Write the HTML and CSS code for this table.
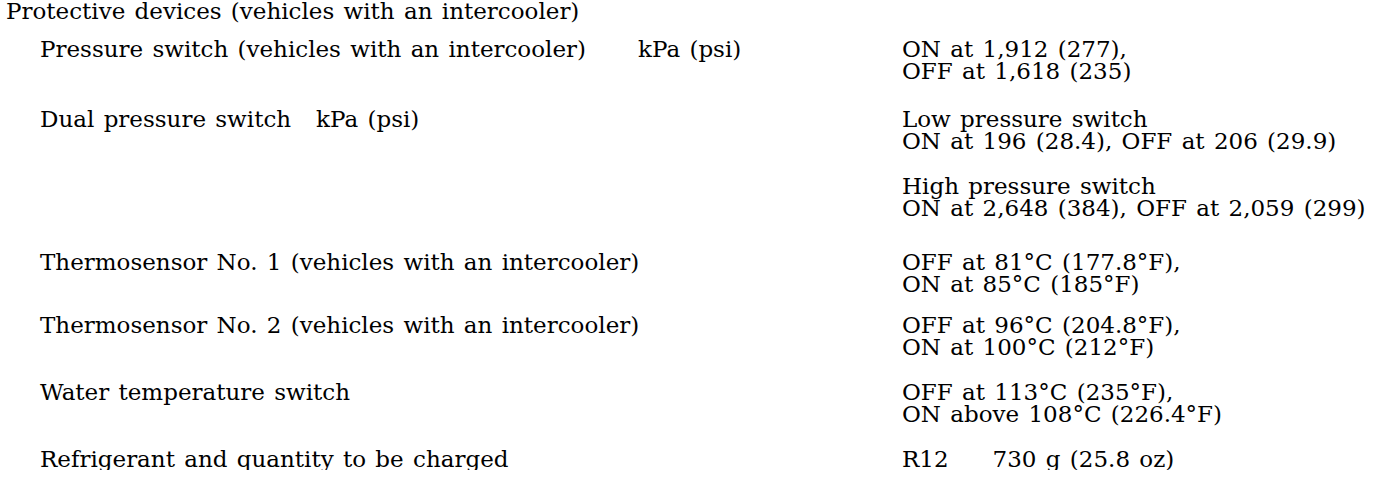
FILE: index.html
```html
<!DOCTYPE html>
<html>
<head>
<meta charset="utf-8">
<link rel="stylesheet" href="styles.css">
</head>
<body>
<div class="spec">
  <div class="heading">Protective devices (vehicles with an intercooler)</div>
  <div class="rows">
    <div class="row r1">
      <div class="label"><span>Pressure switch (vehicles with an intercooler)</span><span class="unit u1">kPa (psi)</span></div>
      <div class="value"><div class="block">ON at 1,912 (277),<br>OFF at 1,618 (235)</div></div>
    </div>
    <div class="row r2">
      <div class="label"><span>Dual pressure switch</span><span class="unit u2">kPa (psi)</span></div>
      <div class="value">
        <div class="block">Low pressure switch<br>ON at 196 (28.4), OFF at 206 (29.9)</div>
        <div class="block">High pressure switch<br>ON at 2,648 (384), OFF at 2,059 (299)</div>
      </div>
    </div>
    <div class="row r3">
      <div class="label">Thermosensor No. 1 (vehicles with an intercooler)</div>
      <div class="value"><div class="block">OFF at 81°C (177.8°F),<br>ON at 85°C (185°F)</div></div>
    </div>
    <div class="row r4">
      <div class="label">Thermosensor No. 2 (vehicles with an intercooler)</div>
      <div class="value"><div class="block">OFF at 96°C (204.8°F),<br>ON at 100°C (212°F)</div></div>
    </div>
    <div class="row r5">
      <div class="label">Water temperature switch</div>
      <div class="value"><div class="block">OFF at 113°C (235°F),<br>ON above 108°C (226.4°F)</div></div>
    </div>
    <div class="row r6">
      <div class="label">Refrigerant and quantity to be charged</div>
      <div class="value"><div class="block"><span class="gas">R12</span>730 g (25.8 oz)</div></div>
    </div>
  </div>
</div>
</body>
</html>
```

FILE: styles.css
```css
html, body {
  margin: 0;
  padding: 0;
  background: #ffffff;
}
body {
  font-family: "DejaVu Serif", "Liberation Serif", serif;
  font-size: 23px;
  line-height: 22px;
  word-spacing: 2px;
  color: #000000;
}
.spec {
  padding: 0 0 0 6px;
}
.rows {
  padding-left: 34px;
  display: flex;
  flex-direction: column;
}
.row {
  display: grid;
  grid-template-columns: 862px 1fr;
}
.label {
  display: flex;
}
.unit.u1 { margin-left: 52px; }
.unit.u2 { margin-left: 25px; }
.value {
  display: flex;
  flex-direction: column;
  gap: 23px;
}
.gas { margin-right: 44px; }
.r1 { margin-top: 16px; }
.r2 { margin-top: 26px; }
.r3 { margin-top: 32px; }
.r4 { margin-top: 19px; }
.r5 { margin-top: 23px; }
.r6 { margin-top: 23px; }
```
